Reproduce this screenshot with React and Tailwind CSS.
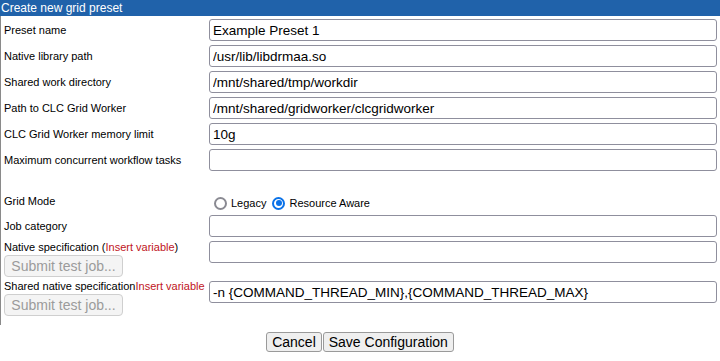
import { useState } from 'react';

const campos = [
  { label: 'Preset name', valor: 'Example Preset 1' },
  { label: 'Native library path', valor: '/usr/lib/libdrmaa.so' },
  { label: 'Shared work directory', valor: '/mnt/shared/tmp/workdir' },
  { label: 'Path to CLC Grid Worker', valor: '/mnt/shared/gridworker/clcgridworker' },
  { label: 'CLC Grid Worker memory limit', valor: '10g' },
  { label: 'Maximum concurrent workflow tasks', valor: '' },
];

const inputCls =
  'w-full h-[22px] px-[3px] border border-[#8f8f9d] rounded-[3px] bg-white text-[13.5px] text-black outline-none';

function Radio({ checked, label, onClick }) {
  return (
    <label className="flex items-center cursor-pointer" onClick={onClick}>
      {checked ? (
        <span className="w-[13px] h-[13px] rounded-full border-[2px] border-[#0a72e8] flex items-center justify-center">
          <span className="w-[6px] h-[6px] rounded-full bg-[#0a72e8]" />
        </span>
      ) : (
        <span className="w-[13px] h-[13px] rounded-full border-[2px] border-[#8a8a92] bg-white" />
      )}
      <span className="ml-[4px] text-[11px]">{label}</span>
    </label>
  );
}

function BotaoTeste() {
  return (
    <button
      disabled
      className="w-[119px] h-[22px] mt-[1px] border border-[#cfcfcf] rounded-[4px] bg-[#f4f4f4] text-[14px] text-[#9b9b9b] leading-none"
    >
      Submit test job...
    </button>
  );
}

export default function App() {
  const [valores, setValores] = useState(campos.map((c) => c.valor));
  const [modo, setModo] = useState('resource');

  return (
    <div className="w-[720px] h-[361px] bg-white text-black font-['Liberation_Sans',Arial,sans-serif]">
      <div className="h-[16px] bg-[#2062aa] text-white text-[12px] leading-[16px] pl-[1px]">
        Create new grid preset
      </div>

      <div className="border-l border-[#8a8a8a] h-[309px] pt-[3px] pr-[3px] flex flex-col gap-[4px]">
        {campos.map((c, i) => (
          <div key={c.label} className="grid grid-cols-[208px_1fr] items-center">
            <span className="pl-[3px] text-[11px]">{c.label}</span>
            <input
              className={inputCls}
              value={valores[i]}
              onChange={(e) =>
                setValores((prev) => prev.map((v, j) => (j === i ? e.target.value : v)))
              }
            />
          </div>
        ))}

        {/* linha vazia */}
        <div className="h-[16px]" />

        <div className="grid grid-cols-[208px_1fr] h-[16px]">
          <span className="pl-[3px] text-[11px] leading-[13px]">Grid Mode</span>
          <div className="flex items-center gap-[6px] pl-[5px] h-[16px]">
            <Radio checked={modo === 'legacy'} label="Legacy" onClick={() => setModo('legacy')} />
            <Radio checked={modo === 'resource'} label="Resource Aware" onClick={() => setModo('resource')} />
          </div>
        </div>

        <div className="grid grid-cols-[208px_1fr] items-center">
          <span className="pl-[3px] text-[11px]">Job category</span>
          <input className={inputCls} defaultValue="" />
        </div>

        <div className="grid grid-cols-[208px_1fr] items-start">
          <div className="pl-[3px] flex flex-col items-start">
            <span className="text-[11px] leading-[13px]">
              Native specification (<span className="text-[#c0141b]">Insert variable</span>)
            </span>
            <BotaoTeste />
          </div>
          <input className={inputCls} defaultValue="" />
        </div>

        <div className="grid grid-cols-[208px_1fr] items-start">
          <div className="pl-[3px] flex flex-col items-start">
            <span className="text-[11px] leading-[13px] mt-[-1px]">
              Shared native specification<span className="text-[#c0141b]">Insert variable</span>
            </span>
            <BotaoTeste />
          </div>
          <input className={inputCls} defaultValue="-n {COMMAND_THREAD_MIN},{COMMAND_THREAD_MAX}" />
        </div>
      </div>

      <div className="flex justify-center mt-[7px]">
        <button className="h-[20px] px-[5px] border border-[#9a9a9a] rounded-[3px] bg-[#efefef] text-[14px] leading-none">
          Cancel
        </button>
        <button className="h-[20px] px-[5px] ml-[1px] border border-[#9a9a9a] rounded-[3px] bg-[#efefef] text-[14px] leading-none">
          Save Configuration
        </button>
      </div>
    </div>
  );
}
